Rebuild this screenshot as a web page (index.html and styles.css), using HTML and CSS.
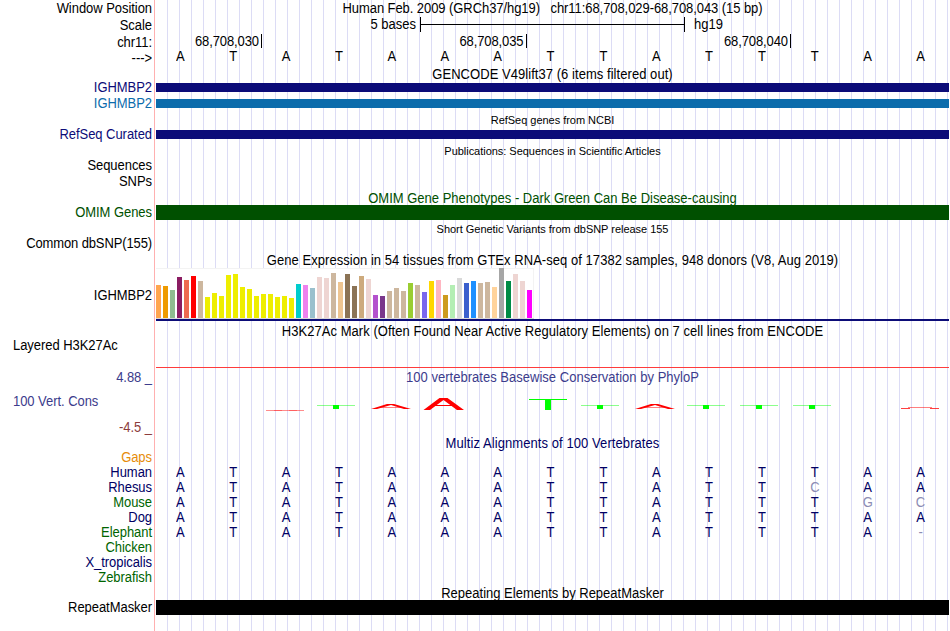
FILE: index.html
```html
<!DOCTYPE html>
<html lang="en">

<head>
    <meta charset="UTF-8">
    <title>Human chr11:68,708,029-68,708,043</title>
    <link rel="stylesheet" href="styles.css">
</head>

<body>
    <div class="browser">
        <div class="labels">
            <div class="label h17"><span>Window Position</span></div>
            <div class="label h17"><span>Scale</span></div>
            <div class="label h17"><span>chr11:</span></div>
            <div class="label h14"><span>---&gt;</span></div>
            <div class="label h14"></div>
            <div class="label h16 navy"><span>IGHMBP2</span></div>
            <div class="label h16 blue"><span>IGHMBP2</span></div>
            <div class="label h15"></div>
            <div class="label h16 navy"><span>RefSeq Curated</span></div>
            <div class="label h15"></div>
            <div class="label h16"><span>Sequences</span></div>
            <div class="label h16"><span>SNPs</span></div>
            <div class="label h15"></div>
            <div class="label h16 green"><span>OMIM Genes</span></div>
            <div class="label h15"></div>
            <div class="label h16"><span class="s-dbsnp">Common dbSNP(155)</span></div>
            <div class="label h36"></div>
            <div class="label h16"><span>IGHMBP2</span></div>
            <div class="label h34"></div>
            <div class="label h16 left"><span>Layered H3K27Ac</span></div>
            <div class="label h16"></div>
            <div class="label h16 cons"><span>4.88 _</span></div>
            <div class="label h8"></div>
            <div class="label h16 left cons"><span>100 Vert. Cons</span></div>
            <div class="label h10"></div>
            <div class="label h16 brown"><span>-4.5 _</span></div>
            <div class="label h15"></div>
            <div class="label h15 orange"><span>Gaps</span></div>
            <div class="label h15 species"><span>Human</span></div>
            <div class="label h15 species"><span>Rhesus</span></div>
            <div class="label h15 darkgreen"><span>Mouse</span></div>
            <div class="label h15 species"><span>Dog</span></div>
            <div class="label h15 darkgreen"><span>Elephant</span></div>
            <div class="label h15 darkgreen"><span>Chicken</span></div>
            <div class="label h15 species"><span>X_tropicalis</span></div>
            <div class="label h15 darkgreen"><span>Zebrafish</span></div>
            <div class="label h15"></div>
            <div class="label h15"><span>RepeatMasker</span></div>
        </div>

        <div class="tracks">
            <div class="title h16"><span class="s-pos">Human Feb. 2009 (GRCh37/hg19) &nbsp; chr11:68,708,029-68,708,043 (15 bp)</span></div>
            <div class="scale">
                <span class="scale-from">5 bases</span>
                <span class="scale-bar"></span>
                <span class="scale-db">hg19</span>
            </div>
            <div class="ruler">
                <div class="tick tick-first"><span>68,708,030</span></div>
                <div class="tick"><span>68,708,035</span></div>
                <div class="tick"><span>68,708,040</span></div>
            </div>
            <div class="bases h17 ref" data-seq="ATATAAATTATTTAA"></div>
            <div class="title h14"><span class="s-gencode">GENCODE V49lift37 (6 items filtered out)</span></div>
            <div class="item bar-navy"></div>
            <div class="item bar-blue"></div>
            <div class="title small refseq">RefSeq genes from NCBI</div>
            <div class="item bar-refseq"></div>
            <div class="title small h24">Publications: Sequences in Scientific Articles</div>
            <div class="gap-pubs"></div>
            <div class="title h14 green"><span>OMIM Gene Phenotypes - Dark Green Can Be Disease-causing</span></div>
            <div class="item bar-omim"></div>
            <div class="title small h18">Short Genetic Variants from dbSNP release 155</div>
            <div class="gap-snp"></div>
            <div class="title h16"><span class="s-gtex">Gene Expression in 54 tissues from GTEx RNA-seq of 17382 samples, 948 donors (V8, Aug 2019)</span></div>
            <div class="gtex" id="gtex"></div>
            <div class="gtex-line"></div>
            <div class="title h20"><span class="s-h3k">H3K27Ac Mark (Often Found Near Active Regulatory Elements) on 7 cell lines from ENCODE</span></div>
            <div class="h3k-line"></div>
            <div class="title h19 cons"><span class="s-phylo">100 vertebrates Basewise Conservation by PhyloP</span></div>
            <svg class="phylop" width="793" height="48" viewBox="156 387 793 48">
                <g fill="none" stroke="#f00">
                    <path d="M266 410.5h38" stroke-opacity=".45" />
                    <path d="M274 410.5h8M289 410.5h8" stroke-opacity=".3" />
                    <path d="M901 408.5h9M930 408.5h9" stroke-opacity=".75" />
                    <path d="M908 407.5h24" stroke-opacity=".5" />
                    <path d="M379 407.5h24M643 407.5h24" stroke-opacity=".5" />
                    <path d="M431 405.5h25" />
                </g>
                <g fill="#f00">
                    <path d="M371 409L387 404h7L411 409H404L391 405L377 409Z" />
                    <path d="M635 409L651 404h7L675 409H668L655 405L641 409Z" />
                    <path d="M423.500 410L439.500 398h8L464 410H457L443.500 400L430 410Z" />
                </g>
                <g fill="#0f0">
                    <path d="M529 399h38v1h-38zM545 400h6v10h-6z" />
                    <path d="M333 405h6v4h-6zM597 405h6v4h-6zM703 405h6v4h-6zM756 405h6v4h-6zM809 405h6v4h-6z" />
                    <path d="M317 405h38v1h-38zM581 405h38v1h-38zM687 405h38v1h-38zM740 405h38v1h-38zM793 405h38v1h-38z" fill-opacity=".45" />
                </g>
            </svg>
            <div class="title h16 species"><span class="s-multiz">Multiz Alignments of 100 Vertebrates</span></div>
            <div class="gap-gaps"></div>
            <div class="bases h15 species" data-seq="ATATAAATTATTTAA"></div>
            <div class="bases h15 species" data-seq="ATATAAATTATTcAA"></div>
            <div class="bases h15 species" data-seq="ATATAAATTATTTgc"></div>
            <div class="bases h15 species" data-seq="ATATAAATTATTTAA"></div>
            <div class="bases h15 species" data-seq="ATATAAATTATTTA-"></div>
            <div class="gap-species"></div>
            <div class="title h14"><span>Repeating Elements by RepeatMasker</span></div>
            <div class="item bar-rmsk"></div>
        </div>
    </div>

    <script src="script.js"></script>
</body>

</html>
```

FILE: styles.css
```css
body {
    margin: 0;
    background-color: #fff;
    color: #000;
    font-family: "Liberation Sans", Arial, sans-serif;
    font-size: 13px;
    overflow: hidden;
}

.browser {
    display: flex;
    width: 949px;
    height: 631px;
}

.labels {
    box-sizing: border-box;
    width: 155px;
    border-right: 1px solid #ffb0b0;
}

.label {
    display: flex;
    justify-content: flex-end;
    align-items: center;
    padding-right: 2px;
    line-height: 15px;
    letter-spacing: -0.05px;
    white-space: pre;
}

.label.left {
    justify-content: flex-start;
    padding-left: 13px;
}

.tracks {
    width: 793px;
    margin-left: 1px;
    /* guide lines every 12px */
    background-image: linear-gradient(to right, transparent 11px, #dcdcf5 11px);
    background-size: 12px 100%;
}

.title {
    display: flex;
    justify-content: center;
    align-items: center;
    line-height: 15px;
    white-space: nowrap;
}

.small {
    font-size: 11px;
    letter-spacing: -0.03px;
}

/* slightly taller letters */
.label span,
.title span,
.tick span,
.bases span,
.scale-from,
.scale-db {
    transform: scaleY(1.08);
}

/* per-title tracking */
.s-pos { letter-spacing: -0.07px; }
.s-gencode { letter-spacing: 0.05px; }
.s-gtex { letter-spacing: 0.045px; }
.s-h3k { letter-spacing: 0.045px; }
.s-phylo { letter-spacing: 0.02px; }
.s-multiz { letter-spacing: 0.08px; }
.s-dbsnp { letter-spacing: -0.12px; }

.h8 { height: 8px; }
.h10 { height: 10px; }
.h14 { height: 14px; }
.h15 { height: 15px; }
.h16 { height: 16px; }
.h17 { height: 17px; }
.h18 { height: 18px; }
.h19 { height: 19px; }
.h20 { height: 20px; }
.h24 { height: 24px; }
.h34 { height: 34px; }
.h36 { height: 36px; }

.navy { color: #0c0c78; }
.blue { color: #0c6cac; }
.green { color: #005000; }
.darkgreen { color: #006400; }
.species { color: #000064; }
.cons { color: #3c3c8c; }
.brown { color: #8c3c3c; }
.orange { color: #e68c0a; }

/* scale and ruler */
.scale {
    display: flex;
    align-items: center;
    height: 17px;
}

.scale-from {
    width: 260px;
    margin-right: 4px;
    text-align: right;
}

.scale-bar {
    box-sizing: border-box;
    width: 265px;
    height: 15px;
    margin-right: 9px;
    border: 1px solid #000;
    border-width: 0 1px;
    background: linear-gradient(#000, #000) 0 7px / 100% 1px no-repeat;
}

.ruler {
    display: flex;
    height: 17px;
    padding-top: 1px;
    box-sizing: border-box;
}

.tick {
    display: flex;
    justify-content: flex-end;
    box-sizing: border-box;
    width: 264.5px;
    height: 14px;
    padding-right: 2px;
    border-right: 1px solid #000;
    line-height: 16px;
    letter-spacing: -0.1px;
}

.tick-first {
    width: 106px;
}

/* base letters, one cell per base */
.bases {
    display: grid;
    grid-template-columns: repeat(15, 1fr);
    margin: 0 2px 0 -2px;
    width: 793px;
    line-height: 15px;
    text-align: center;
}

.bases.ref {
    line-height: 14px;
}

.mismatch {
    color: #8c8cb4;
}

/* solid items */
.item {
    height: 9px;
}

.bar-navy {
    margin-top: 2px;
    background-color: #0c0c78;
}

.bar-blue {
    margin-top: 7px;
    background-color: #0c6cac;
}

.refseq {
    box-sizing: border-box;
    height: 22px;
    padding-top: 2px;
}

.bar-refseq {
    background-color: #0c0c78;
}

.bar-omim {
    height: 15px;
    background-color: #005000;
}

.bar-rmsk {
    height: 15px;
    background-color: #000;
}

.gap-pubs { height: 28px; }
.gap-snp { height: 14px; }
.gap-gaps { height: 14px; }
.gap-species { height: 46px; }

/* expression bars */
.gtex {
    display: flex;
    align-items: flex-end;
    gap: 2px;
    box-sizing: border-box;
    width: 378px;
    height: 51px;
    border-bottom: 1px solid #d8d8d8;
    background-color: #fff;
    box-shadow: inset -1px 1px #f3f3f3;
}

.gtex-bar {
    width: 5px;
}

.gtex-line {
    height: 2px;
    background-color: #0c0c78;
}

.h3k-line {
    height: 1px;
    margin-top: 26px;
    background-color: #ff3c3c;
}

.phylop {
    display: block;
}
```

FILE: script.js
```js
// tissue colour and bar height
const tissues = [
    ["#ffa54f", 33], ["#ee9a00", 32], ["#8fbc8f", 28], ["#8b1c62", 41], ["#ee6a50", 38], ["#ff0000", 42],
    ["#cdb79e", 37], ["#eeee00", 21], ["#eeee00", 25], ["#eeee00", 22], ["#eeee00", 43], ["#eeee00", 44],
    ["#eeee00", 31], ["#eeee00", 29], ["#eeee00", 22], ["#eeee00", 24], ["#eeee00", 24], ["#eeee00", 21],
    ["#eeee00", 22], ["#eeee00", 20], ["#00cdcd", 34], ["#ee82ee", 33], ["#9ac0cd", 30], ["#eed5d2", 41],
    ["#eed5d2", 40], ["#cdb79e", 45], ["#eec591", 36], ["#8b7355", 44], ["#8b7355", 32], ["#cdaa7d", 42],
    ["#eed5d2", 39], ["#b452cd", 23], ["#7a378b", 22], ["#cdb79e", 27], ["#cdb79e", 30], ["#cdb79e", 27],
    ["#9acd32", 35], ["#cdb79e", 33], ["#7a67ee", 26], ["#ffd700", 37], ["#ffb6c1", 38], ["#cd9b1d", 23],
    ["#b4eeb4", 33], ["#d9d9d9", 40], ["#3a5fcd", 35], ["#1e90ff", 37], ["#cdb79e", 35], ["#cdb79e", 36],
    ["#ffd39b", 31], ["#a6a6a6", 50], ["#008b45", 37], ["#eed5d2", 44], ["#eed5d2", 37], ["#ff00ff", 28]
];

const gtex = document.getElementById("gtex");
tissues.forEach(([color, height]) => {
    const bar = document.createElement("div");
    bar.className = "gtex-bar";
    bar.style.backgroundColor = color;
    bar.style.height = height + "px";
    gtex.appendChild(bar);
});

// lower case letters (and gaps) differ from the human sequence
document.querySelectorAll(".bases").forEach(row => {
    for (const base of row.dataset.seq) {
        const cell = document.createElement("span");
        cell.textContent = base.toUpperCase();
        if (base !== base.toUpperCase() || base === "-") {
            cell.className = "mismatch";
        }
        row.appendChild(cell);
    }
});
```
